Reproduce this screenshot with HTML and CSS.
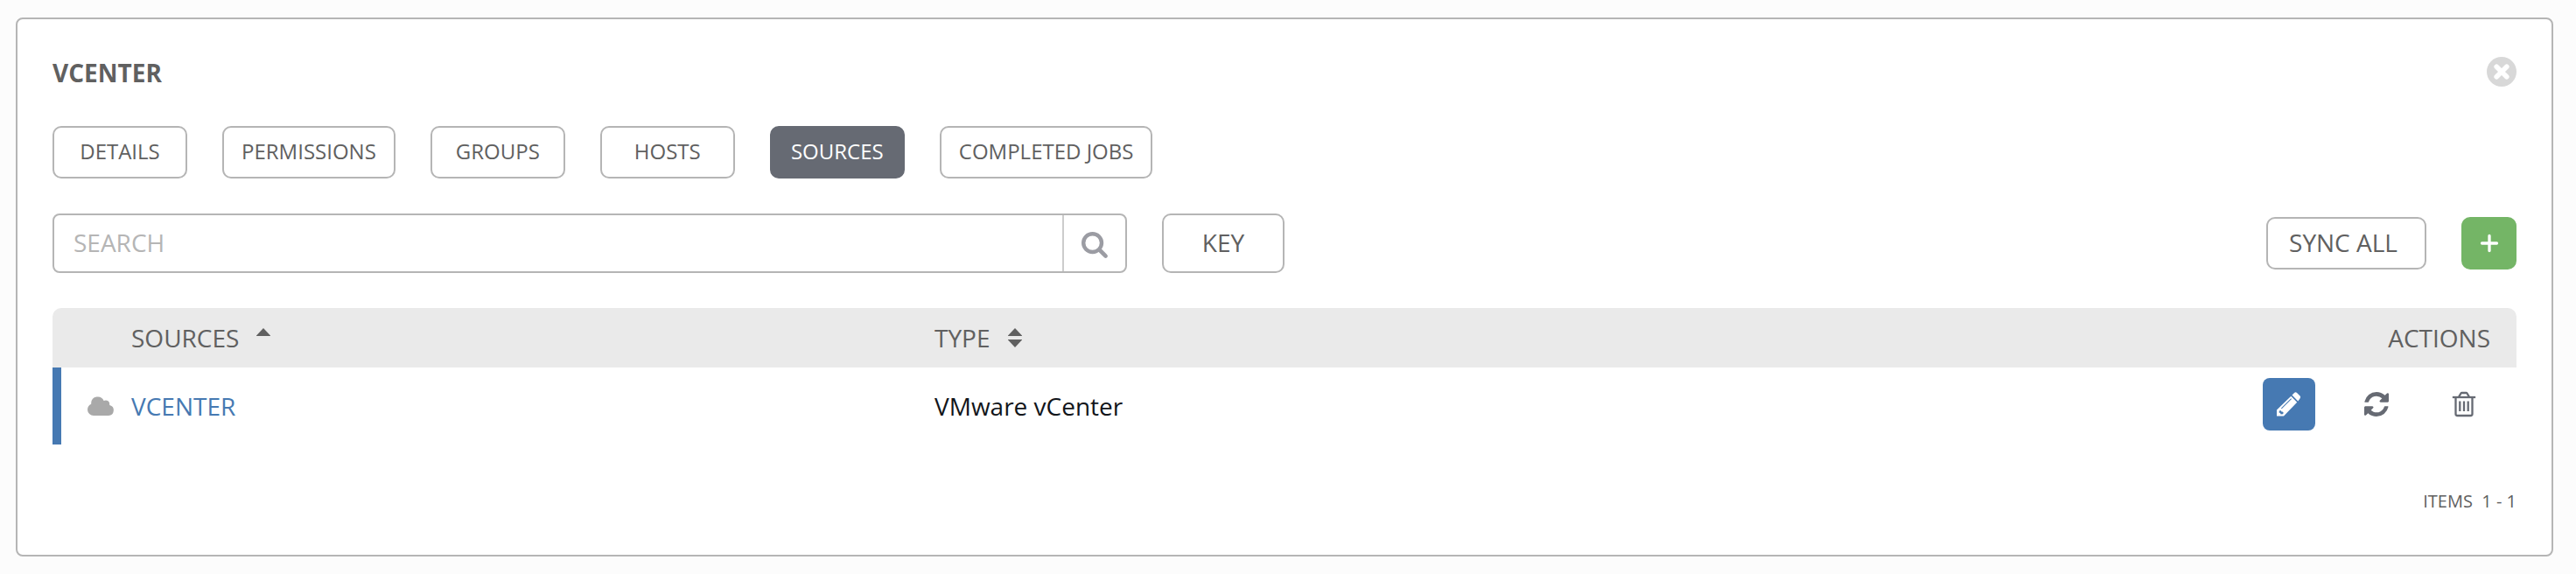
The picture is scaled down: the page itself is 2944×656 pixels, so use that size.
FILE: index.html
```html
<!DOCTYPE html>
<html lang="en">
<head>
<meta charset="utf-8">
<title>vCenter</title>
<link rel="stylesheet" href="styles.css">
</head>
<body>
<section class="card">
  <header class="card-head">
    <h1 class="title">VCENTER</h1>
    <svg class="close" viewBox="0 0 34 34"><circle cx="17" cy="17" r="17" fill="#d8d8d8"/><path d="M11.2 11.2 22.8 22.8M22.8 11.2 11.2 22.8" stroke="#fff" stroke-width="5.6" stroke-linecap="round"/></svg>
  </header>
  <nav class="tabs">
    <a class="tab">DETAILS</a>
    <a class="tab">PERMISSIONS</a>
    <a class="tab">GROUPS</a>
    <a class="tab">HOSTS</a>
    <a class="tab active">SOURCES</a>
    <a class="tab">COMPLETED JOBS</a>
  </nav>
  <div class="toolbar">
    <div class="search">
      <span class="search-text">SEARCH</span>
      <span class="search-btn"><svg width="30" height="30" viewBox="0 0 30 30" fill="none" stroke="#9b9ca3" stroke-linecap="round"><circle cx="12.6" cy="12.6" r="10.4" stroke-width="4.4"/><path d="M20.5 20.5 27.6 27.6" stroke-width="4.6"/></svg></span>
    </div>
    <a class="key">KEY</a>
    <a class="sync">SYNC ALL</a>
    <a class="add"><svg width="20" height="20" viewBox="0 0 20 20"><path d="M10 1.500V18.500M1.500 10H18.500" stroke="#fff" stroke-width="3.3" stroke-linecap="round"/></svg></a>
  </div>
  <div class="thead">
    <span class="col-name">SOURCES<svg class="sort" width="16" height="22" viewBox="0 0 16 22"><path d="M0 8.6 8 0l8 8.6v.4H0z"/></svg></span>
    <span class="col-type">TYPE<svg class="sort sort-both" width="16" height="22" viewBox="0 0 16 22"><path d="M0 8.6 8 0l8 8.6v.4H0zM0 13h16v.4L8 22 0 13.4z"/></svg></span>
    <span class="col-actions">ACTIONS</span>
  </div>
  <div class="row">
    <svg class="cloud" width="30" height="22" viewBox="0 0 30 22"><path d="M7 22A7 7 0 0 1 0 15.200C0 12.300 1.700 10 4.200 8.800V7.600A7.500 7.500 0 0 1 18.600 5.100A4.500 4.500 0 0 1 25.300 10A6.100 6.100 0 0 1 24 22Z" fill="#a9a9a9"/></svg>
    <a class="link">VCENTER</a>
    <span class="type">VMware vCenter</span>
    <span class="actions">
      <a class="act edit"><svg width="28" height="28" viewBox="0 0 28 28" fill="#fff"><path fill-rule="evenodd" d="M16.300 4.800 23.200 11.700 8 27.500H0V20.400ZM16.300 7.300 5 18.500l.7.7L17 8ZM2.900 21.500 2.600 23.500 4 24l.6 1.500 2.400-.2.800-1.500L6.500 22.500 5 22.300 4.600 21Z"/><path d="M17.500 3.600 20.300.8Q21.500-.3 22.800.8L26.600 4.600Q27.700 5.900 26.600 7.300L24.300 10.400Z"/></svg></a>
      <a class="act"><svg width="28" height="28" viewBox="0 0 1536 1536" fill="#666a73"><path d="M1511 928q0 5-1 7-64 268-268 434.500T764 1536q-146 0-282.500-55T238 1324l-129 129q-19 19-45 19t-45-19-19-45V960q0-26 19-45t45-19h448q26 0 45 19t19 45-19 45l-137 137q71 66 161 102t187 36q134 0 250-65t186-179q11-17 53-117 8-23 30-23h192q13 0 22.500 9.500t9.500 22.500zm25-800v448q0 26-19 45t-45 19h-448q-26 0-45-19t-19-45 19-45l138-138Q969 256 768 256q-134 0-250 65T332 500q-11 17-53 117-8 23-30 23H50q-13 0-22.500-9.500T18 608v-7q65-268 270-434.500T768 0q146 0 284 55.500T1297 212l130-129q19-19 45-19t45 19 19 45z"/></svg></a>
      <a class="act"><svg width="26" height="28" viewBox="0 0 26 28" fill="none" stroke="#666a73" stroke-width="2.300"><path d="M1 6H25" stroke-linecap="square"/><path d="M7.500 5.500V4.800L9.500 1.500Q9.800 1 10.500 1H15.500Q16.200 1 16.500 1.500L18.500 4.800V5.500M3.500 6V25Q3.500 27 5.500 27H20.500Q22.500 27 22.500 25V6M8.300 10.500V22M13 10.500V22M17.700 10.500V22"/></svg></a>
    </span>
  </div>
  <footer class="foot">ITEMS&nbsp; 1 - 1</footer>
</section>
</body>
</html>
```
FILE: styles.css
```css
* { box-sizing: border-box; }
body {
  margin: 0;
  padding: 20px 26px 0 18px;
  background: #fcfcfc;
  font-family: "Open Sans", sans-serif;
  font-size: 28px;
  color: #606060;
}
svg { display: block; overflow: visible; flex: none; }
.card {
  height: 616px;
  padding: 0 40px;
  border: 2px solid #b5b5b5;
  border-radius: 8px;
  background: #fff;
}
.card-head { display: flex; justify-content: space-between; height: 122px; }
.title { margin: 0; padding-top: 41px; font-size: 28px; line-height: 40px; font-weight: 700; }
.close { width: 34px; height: 34px; margin-top: 43px; }
.tabs { display: flex; gap: 40px; }
.tab, .key, .sync {
  display: flex;
  align-items: center;
  justify-content: center;
  border: 2px solid #b5b5b5;
  border-radius: 10px;
  white-space: nowrap;
}
.tab { min-width: 154px; height: 60px; padding: 0 20px 3px; font-size: 24px; }
.tab.active { background: #666a73; border-color: #666a73; color: #fff; }
.toolbar { display: flex; align-items: center; height: 68px; margin-top: 40px; }
.search {
  display: flex;
  width: 1228px;
  height: 68px;
  border: 2px solid #b5b5b5;
  border-radius: 8px;
}
.search-text { flex: 1; padding-left: 22px; line-height: 62px; color: #b5b5b5; }
.search-btn {
  display: flex;
  align-items: center;
  justify-content: center;
  width: 72px;
  padding-top: 3px;
  border-left: 2px solid #ccc;
}
.key { width: 140px; height: 68px; margin-left: 40px; padding-bottom: 2px; }
.sync { width: 183px; height: 60px; margin-left: auto; padding: 0 7px 2px 0; }
.add {
  display: flex;
  align-items: center;
  justify-content: center;
  width: 63px;
  height: 60px;
  margin-left: 40px;
  border-radius: 10px;
  background: #74b566;
}
.thead {
  display: flex;
  height: 68px;
  margin-top: 40px;
  padding: 0 30px 0 90px;
  border-radius: 10px 10px 0 0;
  background: #eaeaea;
  line-height: 68px;
}
.col-name, .col-type { display: flex; }
.col-name { width: 918px; }
.col-actions { margin-left: auto; }
.sort { margin: 23px 0 0 20px; fill: #606060; }
.sort-both { margin-left: 21px; }
.row {
  display: flex;
  height: 88px;
  border-left: 10px solid #4679b2;
  padding-left: 30px;
  line-height: 88px;
}
.cloud { margin: 33px 20px 0 0; }
.link { width: 918px; color: #4679b2; }
.type { color: #12151a; }
.actions { display: flex; gap: 40px; margin: 12px 30px 0 auto; }
.act {
  display: flex;
  align-items: center;
  justify-content: center;
  width: 60px;
  height: 60px;
  border-radius: 8px;
}
.edit { background: #4679b2; }
.foot { margin-top: 51px; text-align: right; font-size: 20px; line-height: 27px; }
```
